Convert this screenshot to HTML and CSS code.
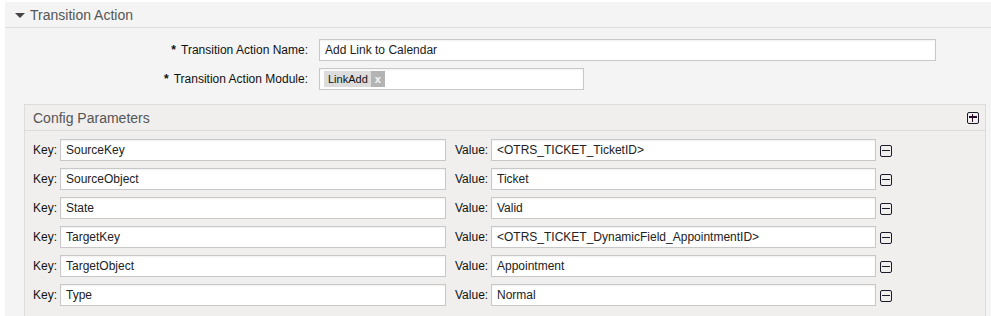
FILE: index.html
```html
<!DOCTYPE html>
<html>
<head>
<meta charset="utf-8">
<link rel="stylesheet" href="styles.css">
</head>
<body>
<div class="widget">
  <div class="widget-header">
    <span class="caret"></span>
    <span class="widget-title">Transition Action</span>
  </div>
  <div class="widget-body">
    <div class="field-row">
      <label class="field-label"><span class="req">*</span> Transition Action Name:</label>
      <div class="input input-name">Add Link to Calendar</div>
    </div>
    <div class="field-row">
      <label class="field-label"><span class="req">*</span> Transition Action Module:</label>
      <div class="input input-module"><span class="chip"><span class="chip-text">LinkAdd</span><span class="chip-x">x</span></span></div>
    </div>
    <div class="config">
      <div class="config-header">
        <span class="config-title">Config Parameters</span>
        <span class="icon-btn plus"></span>
      </div>
      <div class="config-body">
        <div class="param-row">
          <span class="key-label">Key:</span><div class="input input-key">SourceKey</div>
          <span class="value-label">Value:</span><div class="input input-value">&lt;OTRS_TICKET_TicketID&gt;</div>
          <span class="icon-btn minus"></span>
        </div>
        <div class="param-row">
          <span class="key-label">Key:</span><div class="input input-key">SourceObject</div>
          <span class="value-label">Value:</span><div class="input input-value">Ticket</div>
          <span class="icon-btn minus"></span>
        </div>
        <div class="param-row">
          <span class="key-label">Key:</span><div class="input input-key">State</div>
          <span class="value-label">Value:</span><div class="input input-value">Valid</div>
          <span class="icon-btn minus"></span>
        </div>
        <div class="param-row">
          <span class="key-label">Key:</span><div class="input input-key">TargetKey</div>
          <span class="value-label">Value:</span><div class="input input-value">&lt;OTRS_TICKET_DynamicField_AppointmentID&gt;</div>
          <span class="icon-btn minus"></span>
        </div>
        <div class="param-row">
          <span class="key-label">Key:</span><div class="input input-key">TargetObject</div>
          <span class="value-label">Value:</span><div class="input input-value">Appointment</div>
          <span class="icon-btn minus"></span>
        </div>
        <div class="param-row">
          <span class="key-label">Key:</span><div class="input input-key">Type</div>
          <span class="value-label">Value:</span><div class="input input-value">Normal</div>
          <span class="icon-btn minus"></span>
        </div>
      </div>
    </div>
  </div>
</div>
</body>
</html>
```
FILE: styles.css
```css
html, body {
  margin: 0;
  padding: 0;
  background: #fff;
  font-family: "Liberation Sans", Arial, sans-serif;
  font-size: 12px;
  color: #000;
  overflow: hidden;
}
.widget {
  margin: 2px 0 0 5px;
  background: #f4f4f4;
  height: 314px;
  overflow: hidden;
}
.widget-header {
  height: 25px;
  border-bottom: 1px solid #dcdcdc;
  display: flex;
  align-items: center;
  padding-left: 10px;
}
.caret {
  width: 0;
  height: 0;
  border-left: 5px solid transparent;
  border-right: 5px solid transparent;
  border-top: 5px solid #444;
  margin-right: 5px;
  margin-top: 1px;
}
.widget-title {
  font-size: 14px;
  color: #555;
}
.widget-body {
  padding-top: 11px;
}
.field-row {
  display: flex;
  align-items: center;
  margin-bottom: 7px;
}
.field-label {
  width: 303px;
  text-align: right;
  margin-right: 11px;
  color: #111;
}
.req {
  font-weight: bold;
  font-size: 12px;
  margin-right: 2px;
}
.input {
  box-sizing: border-box;
  height: 22px;
  background: #fff;
  border: 1px solid #c8c8c8;
  box-shadow: inset 0 1px 2px rgba(0,0,0,0.06);
  padding: 0 5px;
  line-height: 20px;
  color: #222;
  white-space: nowrap;
  overflow: hidden;
}
.input-name { width: 617px; }
.input-module {
  width: 265px;
  padding: 0 4px;
  display: flex;
  align-items: center;
}
.chip {
  display: flex;
  height: 16px;
  line-height: 16px;
  font-size: 11px;
}
.chip-text {
  background: #dcdcdc;
  padding: 0 3px 0 4px;
  color: #111;
}
.chip-x {
  background: #b4b4b4;
  color: #f4f4f4;
  padding: 0 4px;
  font-weight: bold;
}
.config {
  margin: 14px 5px 0 19px;
  border: 1px solid #dcdcdc;
  border-bottom: none;
  background: #f0efee;
  height: 300px;
}
.config-header {
  height: 25px;
  border-bottom: 1px solid #dcdcdc;
  display: flex;
  align-items: center;
  justify-content: space-between;
  padding: 0 6px 0 8px;
}
.config-title {
  font-size: 14px;
  color: #555;
}
.config-body {
  padding: 8px 0 0 8px;
}
.param-row {
  display: flex;
  align-items: center;
  height: 22px;
  margin-bottom: 7px;
}
.key-label {
  width: 27px;
  color: #111;
}
.input-key { width: 386px; }
.value-label {
  margin-left: 9px;
  width: 36px;
  color: #111;
}
.input-value { width: 385px; }
.icon-btn {
  box-sizing: border-box;
  width: 12px;
  height: 12px;
  border: 1.5px solid #1a1a2a;
  border-radius: 2px;
  position: relative;
}
.minus { margin-left: 4px; margin-top: 2px; }
.minus::after {
  content: "";
  position: absolute;
  left: 1px;
  right: 1px;
  top: 3.5px;
  height: 1.5px;
  background: #1a1a2a;
}
.plus::before, .plus::after {
  content: "";
  position: absolute;
  background: #2a0a2a;
}
.plus::before {
  left: 1px; right: 1px; top: 3.5px; height: 1.5px;
}
.plus::after {
  top: 1px; bottom: 1px; left: 3.5px; width: 1.5px;
}
```
